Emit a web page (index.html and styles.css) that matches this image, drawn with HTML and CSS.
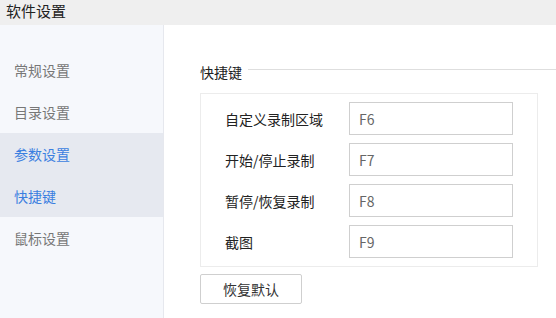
FILE: index.html
```html
<!DOCTYPE html>
<html lang="zh-CN">
<head>
  <meta charset="UTF-8" />
  <title>软件设置</title>
  <link rel="stylesheet" href="styles.css">
</head>
<body>
  <header class="titlebar">软件设置</header>
  <div class="window">
    <nav class="sidebar">
      <div class="nav-item">常规设置</div>
      <div class="nav-item">目录设置</div>
      <div class="nav-item active">参数设置</div>
      <div class="nav-item active">快捷键</div>
      <div class="nav-item">鼠标设置</div>
    </nav>
    <main class="content">
      <div class="group-title"><span>快捷键</span></div>
      <div class="group-box">
        <div class="row"><label>自定义录制区域</label><input type="text" value="F6" /></div>
        <div class="row"><label>开始/停止录制</label><input type="text" value="F7" /></div>
        <div class="row"><label>暂停/恢复录制</label><input type="text" value="F8" /></div>
        <div class="row"><label>截图</label><input type="text" value="F9" /></div>
      </div>
      <button class="btn">恢复默认</button>
    </main>
  </div>
</body>
</html>
```

FILE: styles.css
```css
* { box-sizing: border-box; }
body { margin: 0; width: 556px; height: 318px; overflow: hidden; font-family: "Noto Sans CJK SC", "Noto Sans", sans-serif; font-size: 14px; color: #222; background: #fff; }
.titlebar { height: 25px; background: #efefef; padding: 1px 0 0 6px; font-size: 15px; line-height: 19px; color: #222; }
.window { display: flex; height: 293px; }
.sidebar { width: 164px; background: #f6f8fc; border-right: 1px solid #e6e8ee; padding-top: 24px; }
.nav-item { height: 42px; line-height: 42px; padding-left: 14px; color: #777; }
.nav-item.active { background: #e6e9f0; color: #3b7fe0; }
.content { flex: 1; padding: 34px 0 0 36px; }
.group-title { display: flex; align-items: center; height: 26px; }
.group-title span { padding-right: 6px; }
.group-title::after { content: ""; flex: 1; height: 1px; background: #dedede; margin-top: -6px; }
.group-box { width: 338px; margin-top: 8px; border: 1px solid #ececec; padding: 4px 0 4px 24px; }
.row { display: flex; align-items: center; height: 41px; }
.row label { width: 124px; color: #222; }
.row input { width: 164px; height: 33px; border: 1px solid #cfcfcf; padding: 0 9px; font-family: inherit; font-size: 14px; color: #666; outline: none; }
.btn { margin-top: 7px; width: 102px; height: 30px; background: #fff; border: 1px solid #cfcfcf; border-radius: 2px; font-family: inherit; font-size: 14px; color: #333; }
```
